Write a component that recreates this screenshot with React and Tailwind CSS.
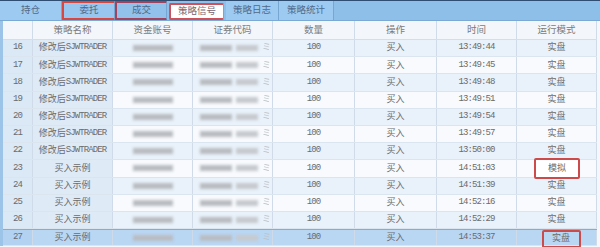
import React from 'react'

const TABS = [
  { label: '持仓', w: 'w-[62px]', box: '' },
  { label: '委托', w: 'w-[53px]', box: 'red' },
  { label: '成交', w: 'w-[52px]', box: 'dark' },
  { label: '策略信号', w: 'w-[55px]', box: 'active' },
  { label: '策略日志', w: 'w-[53px]', box: '' },
  { label: '策略统计', w: 'w-[55px]', box: '' },
]

const ROWS = [
  { n: 16, name: '修改后SJWTRADER', t: '13:49:44', mode: '实盘' },
  { n: 17, name: '修改后SJWTRADER', t: '13:49:45', mode: '实盘' },
  { n: 18, name: '修改后SJWTRADER', t: '13:49:48', mode: '实盘' },
  { n: 19, name: '修改后SJWTRADER', t: '13:49:51', mode: '实盘' },
  { n: 20, name: '修改后SJWTRADER', t: '13:49:54', mode: '实盘' },
  { n: 21, name: '修改后SJWTRADER', t: '13:49:57', mode: '实盘' },
  { n: 22, name: '修改后SJWTRADER', t: '13:50:00', mode: '实盘' },
  { n: 23, name: '买入示例', t: '14:51:03', mode: '模拟', mark: true },
  { n: 24, name: '买入示例', t: '14:51:39', mode: '实盘' },
  { n: 25, name: '买入示例', t: '14:52:16', mode: '实盘' },
  { n: 26, name: '买入示例', t: '14:52:29', mode: '实盘' },
  { n: 27, name: '买入示例', t: '14:53:37', mode: '实盘', mark: true, sel: true },
]

const font = { fontFamily: '"Liberation Serif", "Noto Sans CJK SC", serif' }

function Latin({ children }) {
  return <span className="font-['Liberation_Mono'] tracking-[-0.9px]">{children}</span>
}

function Name({ text }) {
  const m = text.match(/^(.*?)([A-Z]+)$/)
  if (!m) return text
  return (
    <>
      {m[1]}
      <Latin>{m[2]}</Latin>
    </>
  )
}

function Blur({ className }) {
  return <div className={`h-[6px] bg-[#b9bdc2] blur-[1.5px] ${className}`} />
}

export default function App() {
  return (
    <div className="w-[600px] h-[247px] overflow-hidden bg-[#f4f7fb] text-[#6b6b6b]" style={font}>
      {/* Tab bar */}
      <div className="h-[21px] flex bg-[#8dbfe8] border-t border-[#2f4d70] border-b border-b-[#7aa9d6]">
        {TABS.map((t) => {
          let cls = 'bg-[#9dcaf0] text-[#50698a]'
          if (t.box === 'red') cls = 'bg-[#98c6ee] text-[#50698a] border-2 border-[#d9453f] rounded-[1px]'
          if (t.box === 'dark') cls = 'bg-[#92c1ec] text-[#50698a] border-2 border-[#a3425c] rounded-[1px]'
          if (t.box === 'active') cls = 'bg-white text-[#7a6470] border-2 border-[#d0505a] rounded-[2px] mt-[2px] mx-[2px]'
          return (
            <div
              key={t.label}
              className={`${t.w} shrink-0 flex items-center justify-center text-[9.5px] border-r border-r-[#77a6d2] ${cls}`}
            >
              {t.label}
            </div>
          )
        })}
      </div>

      {/* Table */}
      <div className="border-l-[3px] border-[#9cc3e8] w-[597px]">
        <div className="h-[19px] flex bg-[#f3f6fa] text-[9.5px] text-[#7a7a7a] border-b border-[#d3deea]">
          <div className="w-[30px] border-r border-[#cfdbe8]" />
          <div className="w-[80px] border-r border-[#cfdbe8] flex items-center justify-center">策略名称</div>
          <div className="w-[80px] border-r border-[#cfdbe8] flex items-center justify-center">资金账号</div>
          <div className="w-[80px] border-r border-[#cfdbe8] flex items-center justify-center">证券代码</div>
          <div className="w-[82px] border-r border-[#cfdbe8] flex items-center justify-center">数量</div>
          <div className="w-[82px] border-r border-[#cfdbe8] flex items-center justify-center">操作</div>
          <div className="w-[80px] border-r border-[#cfdbe8] flex items-center justify-center">时间</div>
          <div className="w-[80px] border-r border-[#cfdbe8] flex items-center justify-center">运行模式</div>
        </div>

        {ROWS.map((r, i) => {
          const rowBg = r.sel ? 'bg-[#b9d6f3] border-t border-t-[#86acd4]' : i % 2 === 0 ? 'bg-[#e9f1fa]' : 'bg-[#f8fafd]'
          return (
            <div key={r.n} className={`h-[17.2px] flex text-[9px] text-[#6b6b6b] border-b border-[#dbe5f0] ${rowBg}`}>
              <div className={`w-[30px] border-r border-[#cfdbe8] flex items-center justify-center ${r.sel ? 'bg-[#b3d2f2]' : 'bg-[#dbe8f6]'}`}>
                <Latin>{r.n}</Latin>
              </div>
              <div className={`w-[80px] border-r border-[#cfdbe8] flex items-center justify-center ${r.sel ? '' : 'bg-[#dfeaf7]'}`}>
                <Name text={r.name} />
              </div>
              <div className="w-[80px] border-r border-[#cfdbe8] flex items-center pl-[20px]">
                <Blur className="w-[40px]" />
              </div>
              <div className="w-[80px] border-r border-[#cfdbe8] flex items-center gap-[4px] pl-[7px]">
                <Blur className="w-[32px]" />
                <Blur className="w-[22px] bg-[#c6cacf]" />
                <span className="text-[#bcc0c4] blur-[0.6px]">ミ</span>
              </div>
              <div className="w-[82px] border-r border-[#cfdbe8] flex items-center justify-center">
                <Latin>100</Latin>
              </div>
              <div className="w-[82px] border-r border-[#cfdbe8] flex items-center justify-center">买入</div>
              <div className="w-[80px] border-r border-[#cfdbe8] flex items-center justify-center">
                <Latin>{r.t}</Latin>
              </div>
              <div className="w-[80px] border-r border-[#cfdbe8] flex items-center justify-center">
                {r.mark ? (
                  <div
                    className={`flex items-center justify-center border-2 border-[#cc4a4a] rounded-[2px] ${
                      r.sel ? 'w-[39px] h-[18px] mt-[3px] ml-[9px]' : 'w-[46px] h-[21px] ml-[1px] bg-white'
                    }`}
                  >
                    {r.mode}
                  </div>
                ) : (
                  r.mode
                )}
              </div>
            </div>
          )
        })}
      </div>
    </div>
  )
}
